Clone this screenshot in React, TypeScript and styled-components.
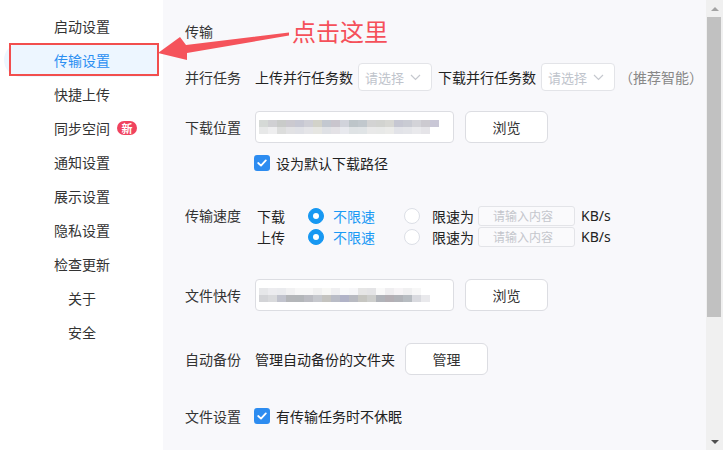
import React from 'react';
import styled, { createGlobalStyle } from 'styled-components';

const GlobalStyle = createGlobalStyle`
  html, body {
    margin: 0;
    padding: 0;
  }
  body {
    font-family: "Noto Sans CJK SC", "Noto Sans", sans-serif;
    color: #333;
  }
`;

const Frame = styled('div')`
  position: relative;
  display: flex;
  width: 723px;
  height: 450px;
  overflow: hidden;
  background: #f8f8fb;
`;

const Sider = styled('div')`
  width: 163px;
  flex-shrink: 0;
  background: #fff;
  padding-top: 9px;
  display: flex;
  flex-direction: column;
`;

const NavItem = styled('div')<{ $active?: boolean; $sub?: boolean }>`
  height: 34px;
  display: flex;
  align-items: center;
  margin: 0 5px 0 4px;
  padding-left: ${(p) => (p.$sub ? 64 : 50)}px;
  border-radius: 17px 0 0 17px;
  font-size: 14px;
  line-height: 20px;
  color: ${(p) => (p.$active ? '#2b8ff2' : '#333')};
  background: ${(p) => (p.$active ? '#edf6ff' : 'transparent')};
  user-select: none;
`;

const Badge = styled('span')`
  margin-left: 7px;
  width: 20px;
  height: 14px;
  border-radius: 7px;
  background: #f0435e;
  color: #fff;
  font-size: 11px;
  font-weight: bold;
  line-height: 14px;
  text-align: center;
`;

const Main = styled('div')`
  flex: 1;
  padding: 21px 0 0 22px;
  display: flex;
  flex-direction: column;
`;

const SectionTitle = styled('div')`
  height: 20px;
  line-height: 20px;
  font-size: 14px;
  color: #333;
`;

const Row = styled('div')<{ $h: number; $mt: number }>`
  display: flex;
  align-items: center;
  height: ${(p) => p.$h}px;
  margin-top: ${(p) => p.$mt}px;
`;

const Label = styled('div')`
  width: 70px;
  flex-shrink: 0;
  font-size: 14px;
  line-height: 20px;
  color: #333;
`;

const Text = styled('span')<{ $ml?: number }>`
  font-size: 14px;
  line-height: 20px;
  color: #222;
  white-space: nowrap;
  margin-left: ${(p) => p.$ml ?? 0}px;
`;

const Hint = styled('span')`
  font-size: 14px;
  line-height: 20px;
  color: #888;
  margin-left: -2px;
`;

const Select = styled('div')`
  box-sizing: border-box;
  width: 74px;
  height: 28px;
  margin: 0 6px 0 5px;
  padding: 0 10px 0 6px;
  border: 1px solid #e3e4e8;
  border-radius: 4px;
  background: #fff;
  display: flex;
  align-items: center;
  justify-content: space-between;
  font-size: 13px;
  color: #c0c4cc;
`;

const PathBox = styled('div')`
  box-sizing: border-box;
  width: 199px;
  height: 32px;
  padding-left: 3px;
  border: 1px solid #dcdde2;
  border-radius: 4px;
  background: #fff;
  display: flex;
  align-items: center;
`;

const Blur = styled('div')`
  display: flex;
  flex-direction: column;
`;

const BlurLine = styled('div')`
  display: flex;
  height: 7px;
`;

const Pix = styled('span')`
  width: 9px;
  height: 7px;
`;

const Button = styled('div')<{ $ml: number }>`
  box-sizing: border-box;
  width: 83px;
  height: 32px;
  margin-left: ${(p) => p.$ml}px;
  border: 1px solid #dcdde2;
  border-radius: 6px;
  background: #fff;
  display: flex;
  align-items: center;
  justify-content: center;
  font-size: 14px;
  color: #333;
`;

const Check = styled('span')`
  width: 16px;
  height: 16px;
  margin-left: -1px;
  border-radius: 3px;
  background: #2d8cf0;
  display: flex;
  align-items: center;
  justify-content: center;
`;

const SpeedBlock = styled('div')`
  display: flex;
  margin-top: 32px;
`;

const SpeedLines = styled('div')`
  display: flex;
  flex-direction: column;
`;

const SpeedLine = styled('div')`
  height: 21px;
  display: flex;
  align-items: center;
`;

const SubLabel = styled('span')`
  width: 51px;
  padding-left: 2px;
  font-size: 14px;
  line-height: 20px;
  color: #222;
`;

const RadioOption = styled('div')<{ $w?: number }>`
  display: flex;
  align-items: center;
  width: ${(p) => (p.$w ? `${p.$w}px` : 'auto')};
`;

const Radio = styled('span')<{ $on?: boolean }>`
  box-sizing: border-box;
  width: 16px;
  height: 16px;
  border-radius: 50%;
  background: ${(p) => (p.$on ? '#1798f2' : '#fff')};
  border: 1px solid ${(p) => (p.$on ? '#1798f2' : '#dcdfe6')};
  display: flex;
  align-items: center;
  justify-content: center;
  &::after {
    content: '';
    display: ${(p) => (p.$on ? 'block' : 'none')};
    width: 6px;
    height: 6px;
    border-radius: 50%;
    background: #fff;
  }
`;

const RadioText = styled('span')<{ $on?: boolean }>`
  margin-left: ${(p) => (p.$on ? 9 : 12)}px;
  font-size: 14px;
  line-height: 20px;
  color: ${(p) => (p.$on ? '#1a9af5' : '#222')};
`;

const SpeedInput = styled('div')`
  box-sizing: border-box;
  width: 97px;
  height: 20px;
  margin: 0 6px 0 4px;
  padding-left: 14px;
  border: 1px solid #e3e4e8;
  border-radius: 3px;
  background: #fafafc;
  font-size: 12px;
  line-height: 18px;
  color: #c4c6cc;
`;

const Unit = styled('span')`
  font-family: "Noto Sans", sans-serif;
  font-size: 14px;
  color: #222;
`;

const ScrollBar = styled('div')`
  width: 17px;
  flex-shrink: 0;
  background: #f0f0f0;
  display: flex;
  flex-direction: column;
`;

const ScrollArrow = styled('div')<{ $down?: boolean }>`
  height: 17px;
  display: flex;
  align-items: center;
  justify-content: center;
  &::before {
    content: '';
    border-left: 4px solid transparent;
    border-right: 4px solid transparent;
    ${(p) => (p.$down ? 'border-top: 4px solid #505050;' : 'border-bottom: 4px solid #a3a3a3;')}
  }
`;

const Thumb = styled('div')`
  height: 300px;
  margin: 0 2px 0 1px;
  background: #c1c1c1;
`;

const Spacer = styled('div')`
  flex: 1;
`;

const Overlay = styled('div')`
  position: absolute;
  inset: 0;
  pointer-events: none;
`;

const RedBox = styled('div')`
  position: absolute;
  left: 9px;
  top: 43px;
  width: 150px;
  height: 33px;
  box-sizing: border-box;
  border: 2px solid #f24e4e;
`;

const Note = styled('div')`
  position: absolute;
  left: 292px;
  top: 19px;
  font-size: 24px;
  line-height: 24px;
  color: #f5505a;
  white-space: nowrap;
`;

const ArrowSvg = styled('svg')`
  position: absolute;
  left: 0;
  top: 0;
`;

const top1 = ['#d5d9d6', '#d0d0d3', '#c9cbc9', '#cbc9cf', '#c7c8d3', '#cfcfd6', '#d2d2c9', '#c3c8d0', '#c9c5cd', '#d1d3db', '#bdc5c9', '#c1c8cd', '#d3d3d3', '#d2d3d0', '#d7d7d3', '#c6c7d2', '#c9cbd3', '#d3d3d8', '#cccad0', '#c9c7d6'];
const bot1 = ['#e7e8e8', '#eeeeef', '#dcdddc', '#e2e2e4', '#e0e1e6', '#e5e5e8', '#e6e6e2', '#dfe1e5', '#e4e2e6', '#e8e9ee', '#dfe3e5', '#e0e4e6', '#e9e9e9', '#e8e9e8', '#ebebe9', '#e2e3e8', '#e4e5e9', '#e9e9ec', '#e5e4e8', '#fff'];
const top2 = ['#e6e7e9', '#ececef', '#eaebee', '#f1f1f2', '#f7f7f7', '#f7f7f7', '#f1f1f1', '#f7f7f5', '#efeff1', '#f9f9fa', '#f6f6f8', '#e6e6e6', '#e4e4e6', '#f9f9f9', '#efeef0', '#f6f4f6', '#f0f0f1', '#f7f7f7', '#fff', '#fff'];
const bot2 = ['#d3d4d7', '#d9dadc', '#c1c3cd', '#b4b6b9', '#b3b6b9', '#bbbcc2', '#c6c8cd', '#c4c3bf', '#b9bcc6', '#b1b3c7', '#b8bac1', '#c6c6c1', '#cdcecc', '#b0b3b9', '#b4afb4', '#b1b3b8', '#b7bcc1', '#d9dadf', '#e9e9ec', '#fff'];

const BlurredPath: React.FunctionComponent<{ top: string[]; bottom: string[] }> = ({ top, bottom }) => (
  <Blur>
    <BlurLine>
      {top.map((c, i) => (
        <Pix key={i} style={{ background: c }} />
      ))}
    </BlurLine>
    <BlurLine>
      {bottom.map((c, i) => (
        <Pix key={i} style={{ background: c }} />
      ))}
    </BlurLine>
  </Blur>
);

const Chevron = () => (
  <svg width="11" height="7" viewBox="0 0 11 7">
    <polyline points="1,1 5.5,5.5 10,1" fill="none" stroke="#c5c8ce" strokeWidth="1.2" />
  </svg>
);

const CheckMark = () => (
  <svg width="10" height="8" viewBox="0 0 10 8">
    <polyline points="1.2,4 4,6.6 8.8,1.4" fill="none" stroke="#fff" strokeWidth="1.8" strokeLinecap="round" strokeLinejoin="round" />
  </svg>
);

const navItems = [
  { name: '启动设置' },
  { name: '传输设置', active: true },
  { name: '快捷上传' },
  { name: '同步空间', badge: '新' },
  { name: '通知设置' },
  { name: '展示设置' },
  { name: '隐私设置' },
  { name: '检查更新' },
  { name: '关于', sub: true },
  { name: '安全', sub: true },
];

const SpeedRow: React.FunctionComponent<{ label: string }> = ({ label }) => (
  <SpeedLine>
    <SubLabel>{label}</SubLabel>
    <RadioOption $w={96}>
      <Radio $on />
      <RadioText $on>不限速</RadioText>
    </RadioOption>
    <RadioOption>
      <Radio />
      <RadioText>限速为</RadioText>
    </RadioOption>
    <SpeedInput>请输入内容</SpeedInput>
    <Unit>KB/s</Unit>
  </SpeedLine>
);

const App: React.FunctionComponent = () => {
  return (
    <Frame>
      <GlobalStyle />
      <Sider>
        {navItems.map((item) => (
          <NavItem key={item.name} $active={item.active} $sub={item.sub}>
            {item.name}
            {item.badge && <Badge>{item.badge}</Badge>}
          </NavItem>
        ))}
      </Sider>
      <Main>
        <SectionTitle>传输</SectionTitle>
        <Row $h={28} $mt={22}>
          <Label>并行任务</Label>
          <Text>上传并行任务数</Text>
          <Select>
            请选择
            <Chevron />
          </Select>
          <Text>下载并行任务数</Text>
          <Select>
            请选择
            <Chevron />
          </Select>
          <Hint>（推荐智能）</Hint>
        </Row>
        <Row $h={32} $mt={20}>
          <Label>下载位置</Label>
          <PathBox>
            <BlurredPath top={top1} bottom={bot1} />
          </PathBox>
          <Button $ml={11}>浏览</Button>
        </Row>
        <Row $h={20} $mt={10}>
          <Label />
          <Check>
            <CheckMark />
          </Check>
          <Text $ml={6}>设为默认下载路径</Text>
        </Row>
        <SpeedBlock>
          <Label>传输速度</Label>
          <SpeedLines>
            <SpeedRow label="下载" />
            <SpeedRow label="上传" />
          </SpeedLines>
        </SpeedBlock>
        <Row $h={32} $mt={32}>
          <Label>文件快传</Label>
          <PathBox>
            <BlurredPath top={top2} bottom={bot2} />
          </PathBox>
          <Button $ml={11}>浏览</Button>
        </Row>
        <Row $h={31} $mt={32}>
          <Label>自动备份</Label>
          <Text>管理自动备份的文件夹</Text>
          <Button $ml={10}>管理</Button>
        </Row>
        <Row $h={20} $mt={32}>
          <Label>文件设置</Label>
          <Check>
            <CheckMark />
          </Check>
          <Text $ml={6}>有传输任务时不休眠</Text>
        </Row>
      </Main>
      <ScrollBar>
        <ScrollArrow />
        <Thumb />
        <Spacer />
        <ScrollArrow $down />
      </ScrollBar>
      <Overlay>
        <RedBox />
        <ArrowSvg width="723" height="450" viewBox="0 0 723 450">
          <polygon
            points="289,32.5 186,45 180,37 158,53 187,60 187,53 289,35.5"
            fill="#f5535b"
          />
        </ArrowSvg>
        <Note>点击这里</Note>
      </Overlay>
    </Frame>
  );
};

export default App;
